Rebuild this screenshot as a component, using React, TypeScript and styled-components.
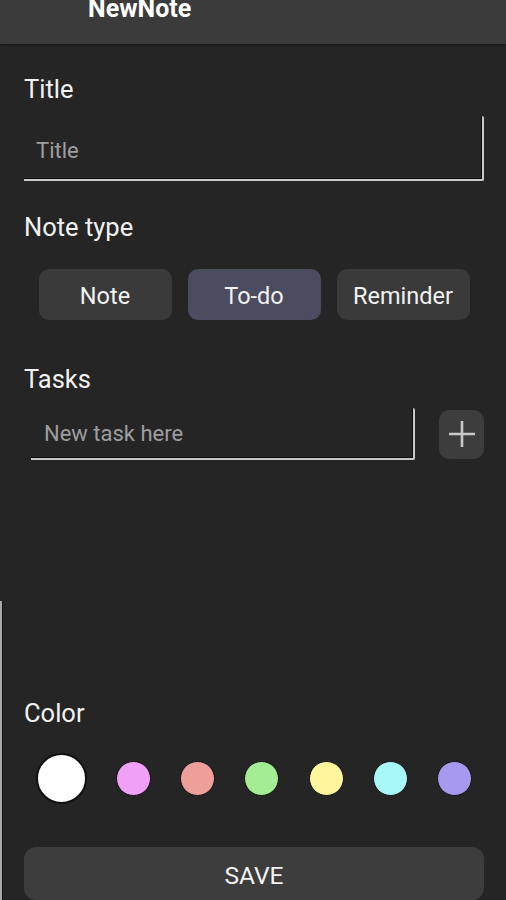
import React from "react";
import styled, { createGlobalStyle } from "styled-components";

const Global = createGlobalStyle`
  html, body { margin: 0; padding: 0; background: #252525; overflow: hidden; }
  * { box-sizing: border-box; }
  body { font-family: Roboto, "Noto Sans", "Liberation Sans", sans-serif; }
`;

const Page = styled.div`
  height: 900px;
  overflow: hidden;
  background: #252525;
  display: flex;
  flex-direction: column;
`;

const Header = styled.header`
  height: 44px;
  flex: none;
  background: #3b3b3b;
  box-shadow: 0 1px 3px rgba(0, 0, 0, 0.45);
  padding-left: 88px;
  overflow: hidden;
  position: relative;
  z-index: 1;
`;

const HeaderTitle = styled.h1`
  margin: -4px 0 0;
  font-size: 25px;
  line-height: 25px;
  font-weight: 700;
  color: #ffffff;
`;

const Content = styled.main`
  padding: 0 22px 0 24px;
  display: flex;
  flex-direction: column;
`;

const Label = styled.div<{ $top: number }>`
  margin-top: ${(p) => p.$top}px;
  font-size: 25.5px;
  line-height: 30px;
  color: #f2f2f2;
`;

const UnderlineInput = styled.input<{ $h: number }>`
  display: block;
  height: ${(p) => p.$h}px;
  background: transparent;
  border: none;
  border-right: 2px solid #c8c8c8;
  border-bottom: 2px solid #c8c8c8;
  border-bottom-right-radius: 2px;
  border-top-right-radius: 2px;
  box-shadow: inset -1px -1px 0 #0c0c0c;
  outline: none;
  font-family: inherit;
  font-size: 22px;
  color: #eeeeee;
  &::placeholder {
    color: #9e9e9e;
  }
`;

const TitleInput = styled(UnderlineInput)`
  margin-top: 12px;
  width: 460px;
  padding: 6px 12px 0;
`;

const TypeRow = styled.div`
  margin-top: 27px;
  display: flex;
  justify-content: center;
  gap: 16px;
`;

const TypeButton = styled.button<{ $active?: boolean }>`
  width: 133px;
  height: 51px;
  border: none;
  border-radius: 10px;
  background: ${(p) => (p.$active ? "#4b4c5f" : "#3a3a3a")};
  color: #f2f2f2;
  font-family: inherit;
  font-size: 23.5px;
  padding: 2px 0 0;
`;

const TaskRow = styled.div`
  margin-top: 14px;
  display: flex;
  align-items: center;
`;

const TaskInput = styled(UnderlineInput)`
  margin-left: 7px;
  width: 384px;
  padding: 0 13px;
`;

const AddButton = styled.button`
  margin-left: 24px;
  width: 45px;
  height: 49px;
  border: none;
  border-radius: 10px;
  background: #3d3d3d;
  display: flex;
  align-items: center;
  justify-content: center;
  padding: 0;
`;

const Spacer = styled.div`
  flex: 1;
`;

const BottomPanel = styled.section`
  flex: none;
  border-left: 2px solid #a9a9a9;
  box-shadow: inset 1px 0 0 #111;
  padding: 0 22px 0 22px;
  display: flex;
  flex-direction: column;
`;

const ColorRow = styled.div`
  margin-top: 25px;
  height: 51px;
  padding: 0 12px 0 12px;
  display: flex;
  align-items: center;
  justify-content: space-between;
`;

const Swatch = styled.div<{ $color: string; $big?: boolean }>`
  width: ${(p) => (p.$big ? 51 : 35)}px;
  height: ${(p) => (p.$big ? 51 : 35)}px;
  border-radius: 50%;
  background: ${(p) => p.$color};
  border: ${(p) => (p.$big ? 2 : 1.5)}px solid #111;
`;

const SaveButton = styled.button`
  margin-top: 43px;
  width: 460px;
  height: 53px;
  border: none;
  border-radius: 12px;
  background: #3d3d3d;
  color: #f2f2f2;
  font-family: inherit;
  font-size: 24.5px;
  padding: 3px 0 0;
`;

const colors = ["#ffffff", "#f0a0f7", "#ee9f9a", "#a3ec93", "#fff59d", "#a9f8f8", "#a899f0"];

export default function App() {
  return (
    <Page>
      <Global />
      <Header>
        <HeaderTitle>NewNote</HeaderTitle>
      </Header>
      <Content>
        <Label $top={30}>Title</Label>
        <TitleInput $h={65} placeholder="Title" />
        <Label $top={31}>Note type</Label>
        <TypeRow>
          <TypeButton>Note</TypeButton>
          <TypeButton $active>To-do</TypeButton>
          <TypeButton>Reminder</TypeButton>
        </TypeRow>
        <Label $top={44}>Tasks</Label>
        <TaskRow>
          <TaskInput $h={52} placeholder="New task here" />
          <AddButton aria-label="Add task">
            <svg width="28" height="28" viewBox="0 0 28 28">
              <path d="M14 1v26M1 14h26" stroke="#c9c9c9" strokeWidth="2.6" fill="none" />
            </svg>
          </AddButton>
        </TaskRow>
      </Content>
      <Spacer />
      <BottomPanel>
        <Label $top={97}>Color</Label>
        <ColorRow>
          {colors.map((c, i) => (
            <Swatch key={c} $color={c} $big={i === 0} />
          ))}
        </ColorRow>
        <SaveButton>SAVE</SaveButton>
      </BottomPanel>
    </Page>
  );
}
